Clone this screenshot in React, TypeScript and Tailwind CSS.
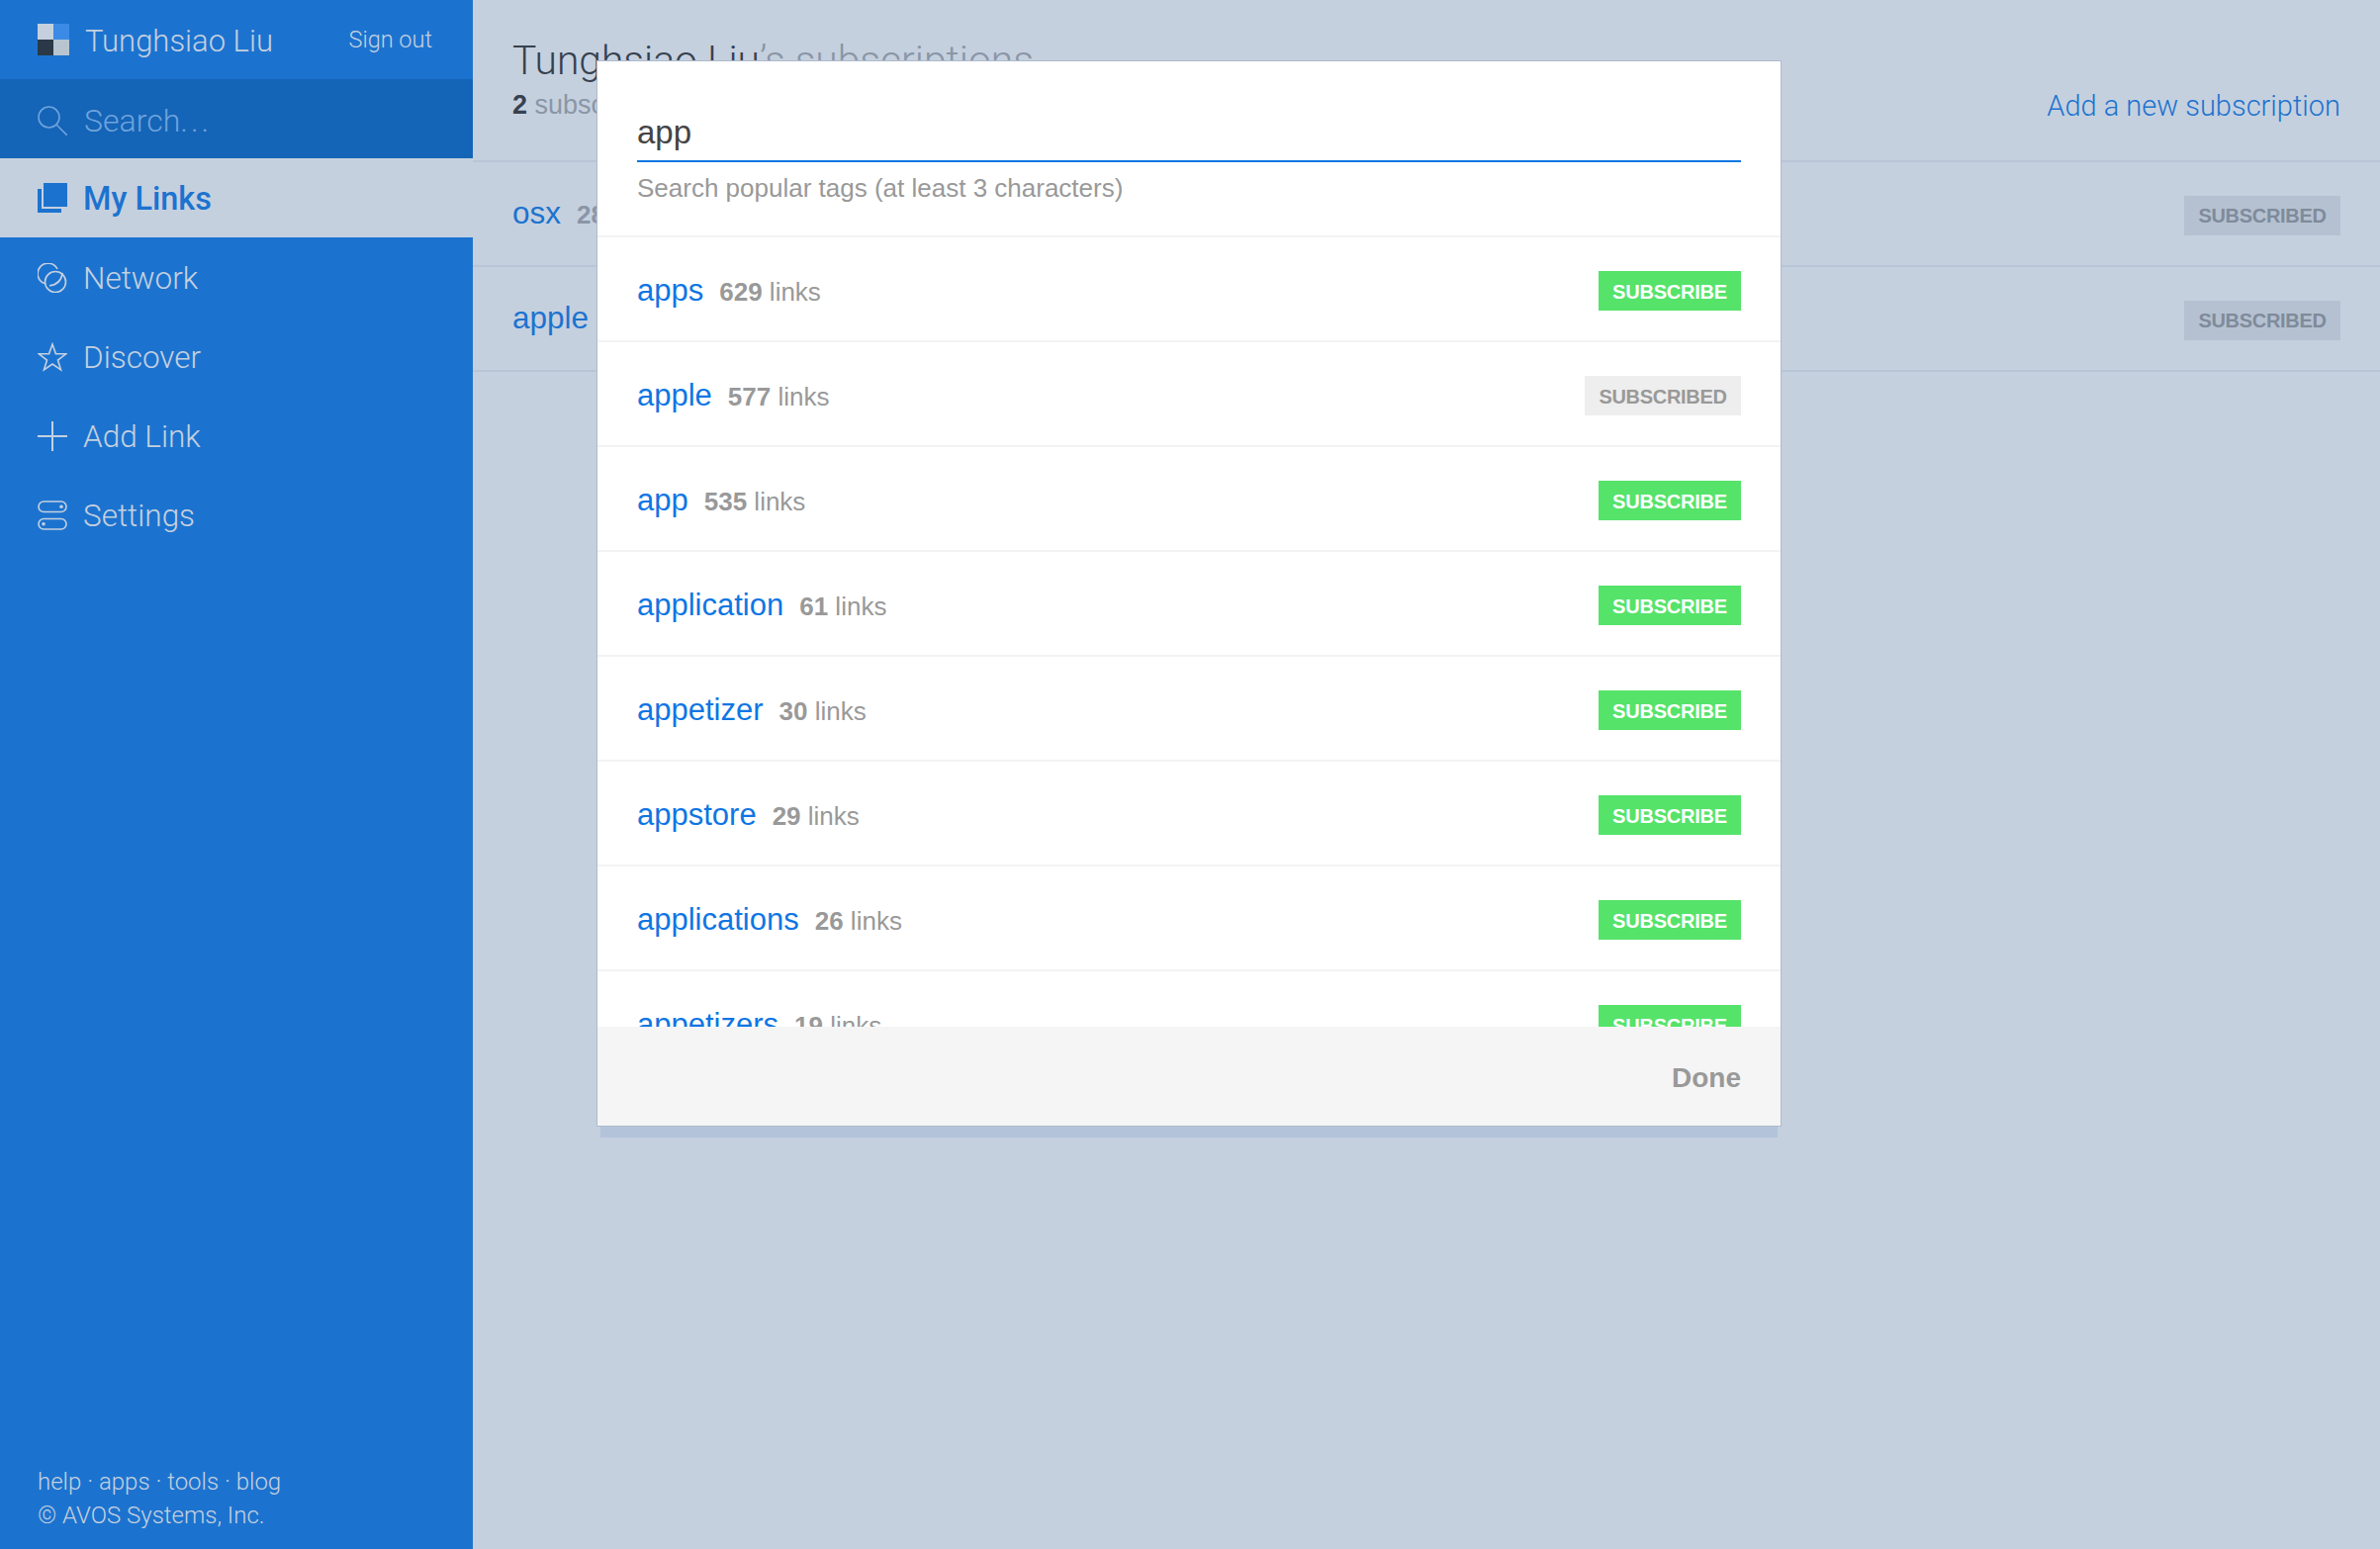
import React from 'react';

const NAV_ICON = 'h-[30px] w-[30px] shrink-0 text-[#c5d0df]';
const LIGHT = "font-['Roboto',sans-serif] font-light";

const SearchIcon = () => (
  <svg viewBox="0 0 30 30" className="h-[30px] w-[30px] shrink-0 text-[#6fa3dc]" fill="none" stroke="currentColor" strokeWidth="1.6">
    <circle cx="11.5" cy="11.5" r="10.5" />
    <path d="M19 19l11 11" />
  </svg>
);

const LinksIcon = () => (
  <svg viewBox="0 0 30 30" className="h-[30px] w-[30px] shrink-0 text-[#1c73cf]" fill="currentColor">
    <path d="M6 0h24v24H6z" />
    <path d="M0 6h4v20h20v4H0z" />
  </svg>
);

const NetworkIcon = () => (
  <svg viewBox="0 0 30 30" className={NAV_ICON} fill="none" stroke="currentColor" strokeWidth="1.6">
    <circle cx="18" cy="19" r="10.5" />
    <path d="M7 20.5A10.5 10.5 0 1 1 20 6" />
    <path d="M12 22.7Q23 22 25.3 10" />
  </svg>
);

const StarIcon = () => (
  <svg viewBox="0 0 30 30" className={NAV_ICON} fill="none" stroke="currentColor" strokeWidth="1.6">
    <path d="M15 2l3.4 9.6 10.2.2-8.1 6.2 3 9.8L15 22l-8.5 5.8 3-9.8-8.1-6.2 10.2-.2z" />
  </svg>
);

const PlusIcon = () => (
  <svg viewBox="0 0 30 30" className={NAV_ICON} fill="none" stroke="currentColor" strokeWidth="2">
    <path d="M15 0v30M0 15h30" />
  </svg>
);

const SettingsIcon = () => (
  <svg viewBox="0 0 30 30" className={NAV_ICON} fill="none" stroke="currentColor" strokeWidth="1.6">
    <rect x="1" y="1" width="28" height="10.5" rx="5.25" />
    <rect x="1" y="18.5" width="28" height="10.5" rx="5.25" />
    <circle cx="24" cy="6.2" r="1.8" fill="currentColor" stroke="none" />
    <circle cx="6" cy="23.8" r="1.8" fill="currentColor" stroke="none" />
  </svg>
);

const NAV_ITEMS = [
  { label: 'Network', icon: <NetworkIcon /> },
  { label: 'Discover', icon: <StarIcon /> },
  { label: 'Add Link', icon: <PlusIcon /> },
  { label: 'Settings', icon: <SettingsIcon /> },
];

const TAGS = [
  { name: 'apps', count: 629 },
  { name: 'apple', count: 577, subscribed: true },
  { name: 'app', count: 535 },
  { name: 'application', count: 61 },
  { name: 'appetizer', count: 30 },
  { name: 'appstore', count: 29 },
  { name: 'applications', count: 26 },
  { name: 'appetizers', count: 19 },
];

const MY_SUBSCRIPTIONS = [
  { name: 'osx', count: 28 },
  { name: 'apple', count: 577 },
];

const Sidebar = () => (
  <aside className={`flex h-full w-[478px] shrink-0 flex-col bg-[#1c73cf] ${LIGHT}`}>
    <div className="flex h-[80px] items-center pl-[38px] pr-[41px]">
      <div className="grid h-[32px] w-[32px] shrink-0 grid-cols-2 grid-rows-2">
        <span className="bg-[#c5d0df]" />
        <span className="bg-[#3b8ae6]" />
        <span className="bg-[#2b3848]" />
        <span className="bg-[#b8c4d0]" />
      </div>
      <span className="ml-[16px] mt-[5px] text-[31px] text-[#c5d0df]">Tunghsiao Liu</span>
      <span className="ml-auto mt-[1px] text-[23.5px] text-[#c5d0df]">Sign out</span>
    </div>
    <div className="flex h-[80px] items-center gap-[17px] bg-[#1464b7] pl-[38px] pt-[3px]">
      <SearchIcon />
      <span className="text-[32px] text-[#6fa3dc]">
        Search<span className="tracking-[3px]">...</span>
      </span>
    </div>
    <div className="flex h-[80px] items-center gap-[16px] bg-[#c5d0df] pl-[38px]">
      <LinksIcon />
      <span className="mt-[3px] text-[32.5px] font-medium text-[#1c73cf]">My Links</span>
    </div>
    {NAV_ITEMS.map(item => (
      <div key={item.label} className="flex h-[80px] items-center gap-[16px] pl-[38px] pt-[2px]">
        {item.icon}
        <span className="mt-[2px] text-[31.5px] text-[#c5d0df]">{item.label}</span>
      </div>
    ))}
    <div className="mt-auto pb-[17px] pl-[38px] text-[24px] leading-[34px] text-[#c5d0df]">
      <p>help · apps · tools · blog</p>
      <p>© AVOS Systems, Inc.</p>
    </div>
  </aside>
);

const Main = () => (
  <main className="min-w-0 flex-1 bg-[#c5d0df]">
    <header className="flex h-[164px] justify-between border-b-2 border-[#b8c5d6] pl-[40px] pr-[40px] pt-[37px]">
      <div>
        <h1 className={`text-[40.8px] leading-[48px] text-[#8a96a6] ${LIGHT}`}>
          <span className="text-[#37414f]">Tunghsiao Liu</span>’s subscriptions
        </h1>
        <p className="mt-[3px] text-[27px] leading-[36px] text-[#8a96a6]">
          <b className="text-[#37414f]">2</b> subscriptions
        </p>
      </div>
      <a className={`mt-[50px] text-[29px] leading-[40px] text-[#1c73cf] ${LIGHT}`}>Add a new subscription</a>
    </header>
    {MY_SUBSCRIPTIONS.map(row => (
      <div key={row.name} className="flex h-[106px] items-center justify-between border-b-2 border-[#b8c5d6] pl-[40px] pr-[40px]">
        <div className="flex items-baseline gap-[16px]">
          <span className="text-[31.5px] text-[#1c73cf]">{row.name}</span>
          <span className="text-[26px] text-[#8a96a6]">
            <b>{row.count}</b> links
          </span>
        </div>
        <span className="mt-[4px] flex h-[40px] w-[158px] items-center justify-center bg-[#b5c1d1] text-[20px] font-bold tracking-[-0.3px] text-[#7f8b9b]">
          SUBSCRIBED
        </span>
      </div>
    ))}
  </main>
);

const TagRow = ({ name, count, subscribed }: { name: string; count: number; subscribed?: boolean }) => (
  <div className="flex h-[106px] shrink-0 items-center justify-between border-b-2 border-[#f3f3f3] pl-[40px] pr-[40px] pt-[4px]">
    <div className="flex items-baseline gap-[16px]">
      <span className="text-[31px] text-[#0f76e3]">{name}</span>
      <span className="text-[26px] text-[#999999]">
        <b>{count}</b> links
      </span>
    </div>
    {subscribed ? (
      <span className="flex h-[40px] w-[158px] items-center justify-center bg-[#eeeeee] pt-[1px] text-[20px] font-bold tracking-[-0.3px] text-[#999999]">
        SUBSCRIBED
      </span>
    ) : (
      <span className="flex h-[40px] w-[144px] items-center justify-center bg-[#55e36a] pt-[1px] text-[20px] font-bold tracking-[-0.2px] text-white">
        SUBSCRIBE
      </span>
    )}
  </div>
);

const TagModal = () => (
  <div className="absolute left-[604px] top-[62px] flex h-[1076px] w-[1196px] flex-col bg-white shadow-[0_0_0_1px_#aebbcc,0_15px_0_-3px_#b3c3da]">
    <div className="h-[178px] shrink-0 border-b-2 border-[#f3f3f3] px-[40px] pt-[50px]">
      <div className="h-[52px] border-b-2 border-[#0f76e3] text-[33px] leading-[44px] text-[#444444]">app</div>
      <p className="mt-[8px] text-[26px] leading-[36px] text-[#999999]">Search popular tags (at least 3 characters)</p>
    </div>
    <div className="flex min-h-0 flex-1 flex-col overflow-hidden">
      {TAGS.map(tag => (
        <TagRow key={tag.name} {...tag} />
      ))}
    </div>
    <div className="flex h-[100px] shrink-0 items-center justify-end bg-[#f5f5f5] pr-[40px] pt-[3px] text-[28px] font-bold text-[#999999]">
      Done
    </div>
  </div>
);

export default function App() {
  return (
    <div className="relative flex h-[1566px] w-[2406px] overflow-hidden font-['Liberation_Sans',Arial,sans-serif]">
      <Sidebar />
      <Main />
      <TagModal />
    </div>
  );
}
